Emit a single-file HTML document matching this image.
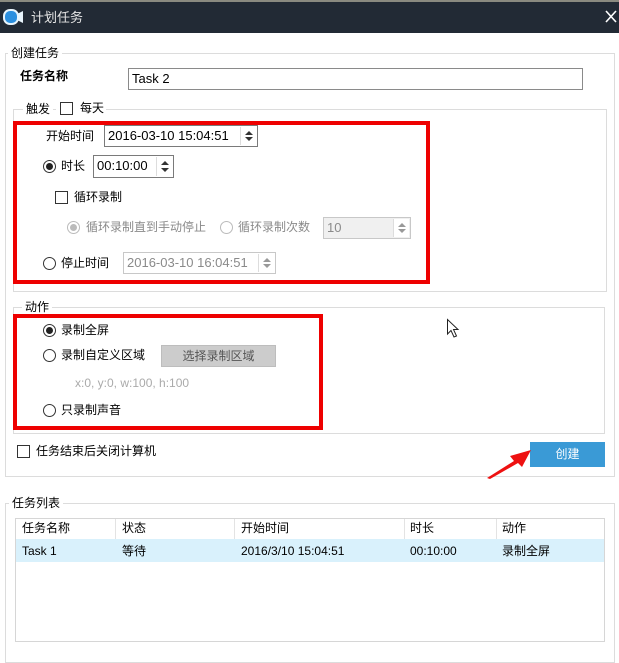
<!DOCTYPE html>
<html><head><meta charset="utf-8"><style>
*{margin:0;padding:0;box-sizing:border-box}
body{width:619px;height:650px;background:#fff;position:relative;overflow:hidden;font-family:"Liberation Sans","Noto Sans CJK SC",sans-serif;font-size:12px;color:#000}
.a{position:absolute;white-space:nowrap;line-height:15px}
.grp{position:absolute;border:1px solid #dcdcdc}
.lbl{position:absolute;background:#fff;padding:0 3px;line-height:14px}
.inp{position:absolute;border:1px solid #7a7a7a;background:#fff;padding-left:3px;line-height:20px;font-size:13px}
.dis{border-color:#c8c8c8;color:#8a8a8a;background:#fff}
.spin{position:absolute;right:1px;top:1px;bottom:1px;width:16px;border-left:1px solid #ddd}
.spin:before,.spin:after{content:"";position:absolute;left:4px;border-left:4px solid transparent;border-right:4px solid transparent}
.spin:before{top:4px;border-bottom:4px solid #333}
.spin:after{bottom:4px;border-top:4px solid #333}
.dis .spin:before{border-bottom-color:#999}.dis .spin:after{border-top-color:#999}
.cb{position:absolute;width:13px;height:13px;border:1px solid #333;background:#fff}
.rd{position:absolute;width:13px;height:13px;border:1px solid #333;border-radius:50%;background:#fff}
.rd.on:after{content:"";position:absolute;left:2px;top:2px;width:7px;height:7px;border-radius:50%;background:#222}
.rd.g{border-color:#bbb}.rd.g.on:after{background:#bbb}
.red{position:absolute;border:4px solid #ee0000}
.g2{color:#8a8a8a}
</style></head><body>
<div class="a" style="left:0;top:0;width:619px;height:2px;background:#8a8a80"></div>
<div class="a" style="left:0;top:2px;width:619px;height:31px;background:#222a35"></div>
<svg class="a" style="left:2px;top:8px" width="22" height="20"><rect x="1" y="1" width="16" height="16" rx="7" fill="#e8f4fc"/><rect x="3" y="3" width="12" height="12" rx="5" fill="#2b8fdf"/><path d="M15 6 L21 3 L21 15 L15 12 Z" fill="#e8f4fc"/></svg>
<div class="a" style="left:31px;top:10px;color:#e6e6e6;font-size:13px">计划任务</div>
<svg class="a" style="left:605px;top:10px" width="12" height="13"><path d="M1 1 L11 12 M11 1 L1 12" stroke="#fff" stroke-width="1.6"/></svg>

<div class="grp" style="left:5px;top:53px;width:610px;height:424px"></div>
<div class="lbl" style="left:8px;top:46px">创建任务</div>
<div class="a" style="left:20px;top:69px;font-weight:bold">任务名称</div>
<div class="inp" style="left:128px;top:68px;width:455px;height:22px;border-color:#8a8a8a">Task 2</div>

<div class="grp" style="left:13px;top:109px;width:594px;height:183px"></div>
<div class="lbl" style="left:23px;top:102px">触发</div>
<div class="a" style="left:56px;top:101px;width:50px;height:16px;background:#fff"></div>
<div class="cb" style="left:60px;top:102px"></div>
<div class="a" style="left:80px;top:101px">每天</div>

<div class="red" style="left:13px;top:121px;width:417px;height:163px"></div>
<div class="a" style="left:46px;top:129px">开始时间</div>
<div class="inp" style="left:104px;top:125px;width:154px;height:22px">2016-03-10 15:04:51<span class="spin"></span></div>
<div class="rd on" style="left:43px;top:160px"></div>
<div class="a" style="left:61px;top:159px">时长</div>
<div class="inp" style="left:93px;top:155px;width:81px;height:23px">00:10:00<span class="spin"></span></div>
<div class="cb" style="left:55px;top:191px"></div>
<div class="a" style="left:74px;top:190px">循环录制</div>
<div class="rd g on" style="left:67px;top:221px"></div>
<div class="a g2" style="left:86px;top:220px">循环录制直到手动停止</div>
<div class="rd g" style="left:220px;top:221px"></div>
<div class="a g2" style="left:238px;top:220px">循环录制次数</div>
<div class="inp dis" style="left:323px;top:217px;width:88px;height:22px;background:#f0f0f0">10<span class="spin" style="background:#fff"></span></div>
<div class="rd" style="left:43px;top:257px"></div>
<div class="a" style="left:61px;top:256px">停止时间</div>
<div class="inp dis" style="left:123px;top:252px;width:153px;height:22px">2016-03-10 16:04:51<span class="spin"></span></div>

<div class="grp" style="left:13px;top:307px;width:592px;height:127px"></div>
<div class="lbl" style="left:22px;top:300px">动作</div>
<div class="red" style="left:13px;top:314px;width:310px;height:116px"></div>
<div class="rd on" style="left:43px;top:324px"></div>
<div class="a" style="left:61px;top:323px">录制全屏</div>
<div class="rd" style="left:43px;top:349px"></div>
<div class="a" style="left:61px;top:348px">录制自定义区域</div>
<div class="a" style="left:161px;top:345px;width:115px;height:22px;background:#cccccc;border:1px solid #bdbdbd;color:#555;text-align:center;line-height:20px">选择录制区域</div>
<div class="a g2" style="left:75px;top:376px;color:#aaa">x:0, y:0, w:100, h:100</div>
<div class="rd" style="left:43px;top:404px"></div>
<div class="a" style="left:61px;top:403px">只录制声音</div>

<div class="cb" style="left:17px;top:445px"></div>
<div class="a" style="left:36px;top:444px">任务结束后关闭计算机</div>
<div class="a" style="left:530px;top:442px;width:75px;height:25px;background:#3a9ad6;color:#fff;text-align:center;line-height:25px">创建</div>
<svg class="a" style="left:0;top:0" width="619" height="650"><polygon points="487,478 514,461 510,456 531,450 522,467 518,463 490,479" fill="#ee1111"/></svg>
<svg class="a" style="left:446px;top:318px" width="14" height="22"><path d="M1.5 1.5 L1.5 16 L5 12.5 L8 19 L10.5 18 L7.5 11.5 L12 11.5 Z" fill="#fff" stroke="#222" stroke-width="1"/></svg>

<div class="grp" style="left:5px;top:503px;width:610px;height:160px"></div>
<div class="lbl" style="left:9px;top:496px">任务列表</div>
<div class="a" style="left:15px;top:518px;width:590px;height:124px;border:1px solid #d6d6d6;background:#fff"></div>
<div class="a" style="left:16px;top:539px;width:588px;height:23px;background:#d9f1fc"></div>
<div class="a" style="left:115px;top:519px;width:1px;height:20px;background:#e3e3e3"></div>
<div class="a" style="left:234px;top:519px;width:1px;height:20px;background:#e3e3e3"></div>
<div class="a" style="left:404px;top:519px;width:1px;height:20px;background:#e3e3e3"></div>
<div class="a" style="left:496px;top:519px;width:1px;height:20px;background:#e3e3e3"></div>
<div class="a" style="left:22px;top:521px">任务名称</div>
<div class="a" style="left:122px;top:521px">状态</div>
<div class="a" style="left:241px;top:521px">开始时间</div>
<div class="a" style="left:410px;top:521px">时长</div>
<div class="a" style="left:502px;top:521px">动作</div>
<div class="a" style="left:22px;top:544px">Task 1</div>
<div class="a" style="left:122px;top:544px">等待</div>
<div class="a" style="left:241px;top:544px">2016/3/10 15:04:51</div>
<div class="a" style="left:410px;top:544px">00:10:00</div>
<div class="a" style="left:502px;top:544px">录制全屏</div>
</body></html>
